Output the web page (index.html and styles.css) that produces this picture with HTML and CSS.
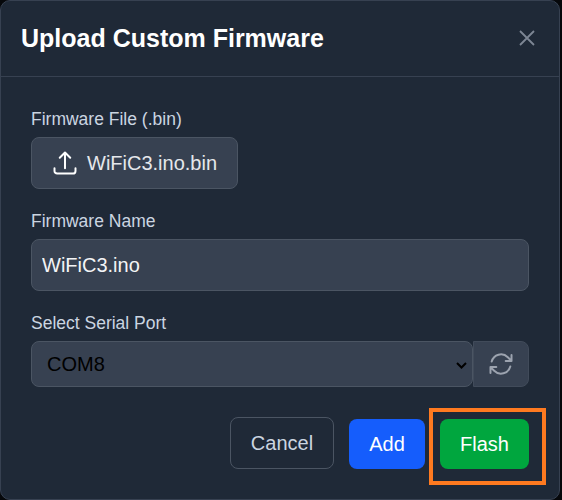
FILE: index.html
```html
<!DOCTYPE html>
<html lang="en">
<head>
<meta charset="utf-8">
<title>Upload Custom Firmware</title>
<link rel="stylesheet" href="styles.css">
</head>
<body>
<div class="modal">
  <header class="modal-header">
    <h2 class="modal-title">Upload Custom Firmware</h2>
    <button class="close" aria-label="Close">
      <svg width="16" height="16" viewBox="0 0 16 16"><path d="M1 1l14 14M15 1L1 15" stroke="currentColor" stroke-width="1.8" fill="none"/></svg>
    </button>
  </header>
  <div class="modal-body">
    <div class="field">
      <label class="label">Firmware File (.bin)</label>
      <div>
        <button class="file-btn">
          <svg width="28" height="28" viewBox="0 0 24 24" fill="none" stroke="currentColor" stroke-width="1.7" stroke-linecap="round" stroke-linejoin="round"><path d="M3 16.500v2.250A2.250 2.250 0 0 0 5.250 21h13.500A2.250 2.250 0 0 0 21 18.750V16.500m-13.500-9L12 3m0 0 4.500 4.500M12 3v13.500"/></svg>
          <span>WiFiC3.ino.bin</span>
        </button>
      </div>
    </div>
    <div class="field">
      <label class="label">Firmware Name</label>
      <input class="text-input" type="text" value="WiFiC3.ino">
    </div>
    <div class="field">
      <label class="label">Select Serial Port</label>
      <div class="port-row">
        <select class="port-select"><option>COM8</option></select>
        <button class="refresh" aria-label="Refresh">
          <svg width="28" height="28" viewBox="0 0 24 24" fill="none" stroke="currentColor" stroke-width="1.7" stroke-linecap="round" stroke-linejoin="round"><path d="M16.023 9.348h4.992v-.001M2.985 19.644v-4.992m0 0h4.992m-4.993 0 3.181 3.183a8.250 8.250 0 0 0 13.803-3.700M4.031 9.865a8.250 8.250 0 0 1 13.803-3.700l3.181 3.182m0-4.991v4.990"/></svg>
        </button>
      </div>
    </div>
  </div>
  <footer class="modal-footer">
    <button class="btn cancel">Cancel</button>
    <button class="btn add">Add</button>
    <button class="btn flash">Flash</button>
  </footer>
  <div class="highlight"></div>
</div>
</body>
</html>
```

FILE: styles.css
```css
* { box-sizing: border-box; }
html, body { margin: 0; padding: 0; background: #06080b; }
body { font-family: "Liberation Sans", Arial, sans-serif; width: 562px; height: 500px; overflow: hidden; }
.modal {
  position: relative;
  width: 560px;
  height: 500px;
  background: #1f2937;
  border: 1px solid #374151;
  border-radius: 10px;
  display: flex;
  flex-direction: column;
}
.modal-header {
  height: 76px;
  border-bottom: 1px solid #374151;
  padding: 0 24px 1px 20px;
  display: flex;
  align-items: center;
  justify-content: space-between;
  flex: none;
}
.modal-title { margin: 0; font-size: 25px; font-weight: 700; color: #fff; line-height: 1.2; }
.close { background: none; border: 0; padding: 0; color: #7d8694; display: flex; }
.modal-body { padding: 32px 30px 0; flex: none; display: flex; flex-direction: column; gap: 22px; }
.field { display: flex; flex-direction: column; gap: 8px; }
.label { font-size: 17.5px; line-height: 20px; color: #cbd5e1; }
.file-btn {
  width: 207px;
  height: 52px;
  padding: 0 0 0 19px;
  display: inline-flex;
  align-items: center;
  gap: 8px;
  background: #374151;
  border: 1px solid #4b5563;
  border-radius: 8px;
  color: #e5e7eb;
  font: 20px "Liberation Sans", Arial, sans-serif;
}
.file-btn svg { color: #fff; }
.text-input {
  display: block;
  width: 100%;
  height: 52px;
  padding: 0 10px;
  background: #374151;
  border: 1px solid #4b5563;
  border-radius: 8px;
  color: #f3f4f6;
  font: 20px "Liberation Sans", Arial, sans-serif;
  outline: none;
}
.port-row { display: flex; height: 46px; }
.port-select {
  flex: 1;
  min-width: 0;
  height: 46px;
  padding: 0 24px 0 15px;
  appearance: none;
  background-color: #374151;
  background-image: url("data:image/svg+xml,%3Csvg xmlns='http://www.w3.org/2000/svg' viewBox='0 0 11 7'%3E%3Cpath d='M1 1l4.500 4.500L10 1' fill='none' stroke='%23000' stroke-width='2'/%3E%3C/svg%3E");
  background-repeat: no-repeat;
  background-size: 11px 7px;
  background-position: right 5px top 20px;
  border: 1px solid #4b5563;
  border-radius: 8px;
  color: #000;
  font: 20px "Liberation Sans", Arial, sans-serif;
}
.refresh {
  width: 56px;
  height: 46px;
  flex: none;
  background: #374151;
  border: 1px solid #414b5a;
  border-radius: 0 8px 8px 0;
  color: #9ca3af;
  display: flex;
  align-items: center;
  justify-content: center;
  padding: 0;
}
.modal-footer {
  margin-top: 30px;
  padding-right: 30px;
  display: flex;
  justify-content: flex-end;
  align-items: flex-end;
  gap: 15px;
}
.btn {
  height: 50px;
  border: 0;
  border-radius: 8px;
  color: #fff;
  font: 20px "Liberation Sans", Arial, sans-serif;
  padding: 0;
}
.cancel { width: 104px; height: 52px; background: transparent; border: 1px solid #4b5563; color: #cbd5e1; }
.add { width: 76px; background: #155dfc; }
.flash { width: 89px; background: #00a63e; }
.highlight {
  position: absolute;
  left: 428px;
  top: 407px;
  width: 117px;
  height: 77px;
  border: 4px solid #ff7a20;
  pointer-events: none;
}
```
